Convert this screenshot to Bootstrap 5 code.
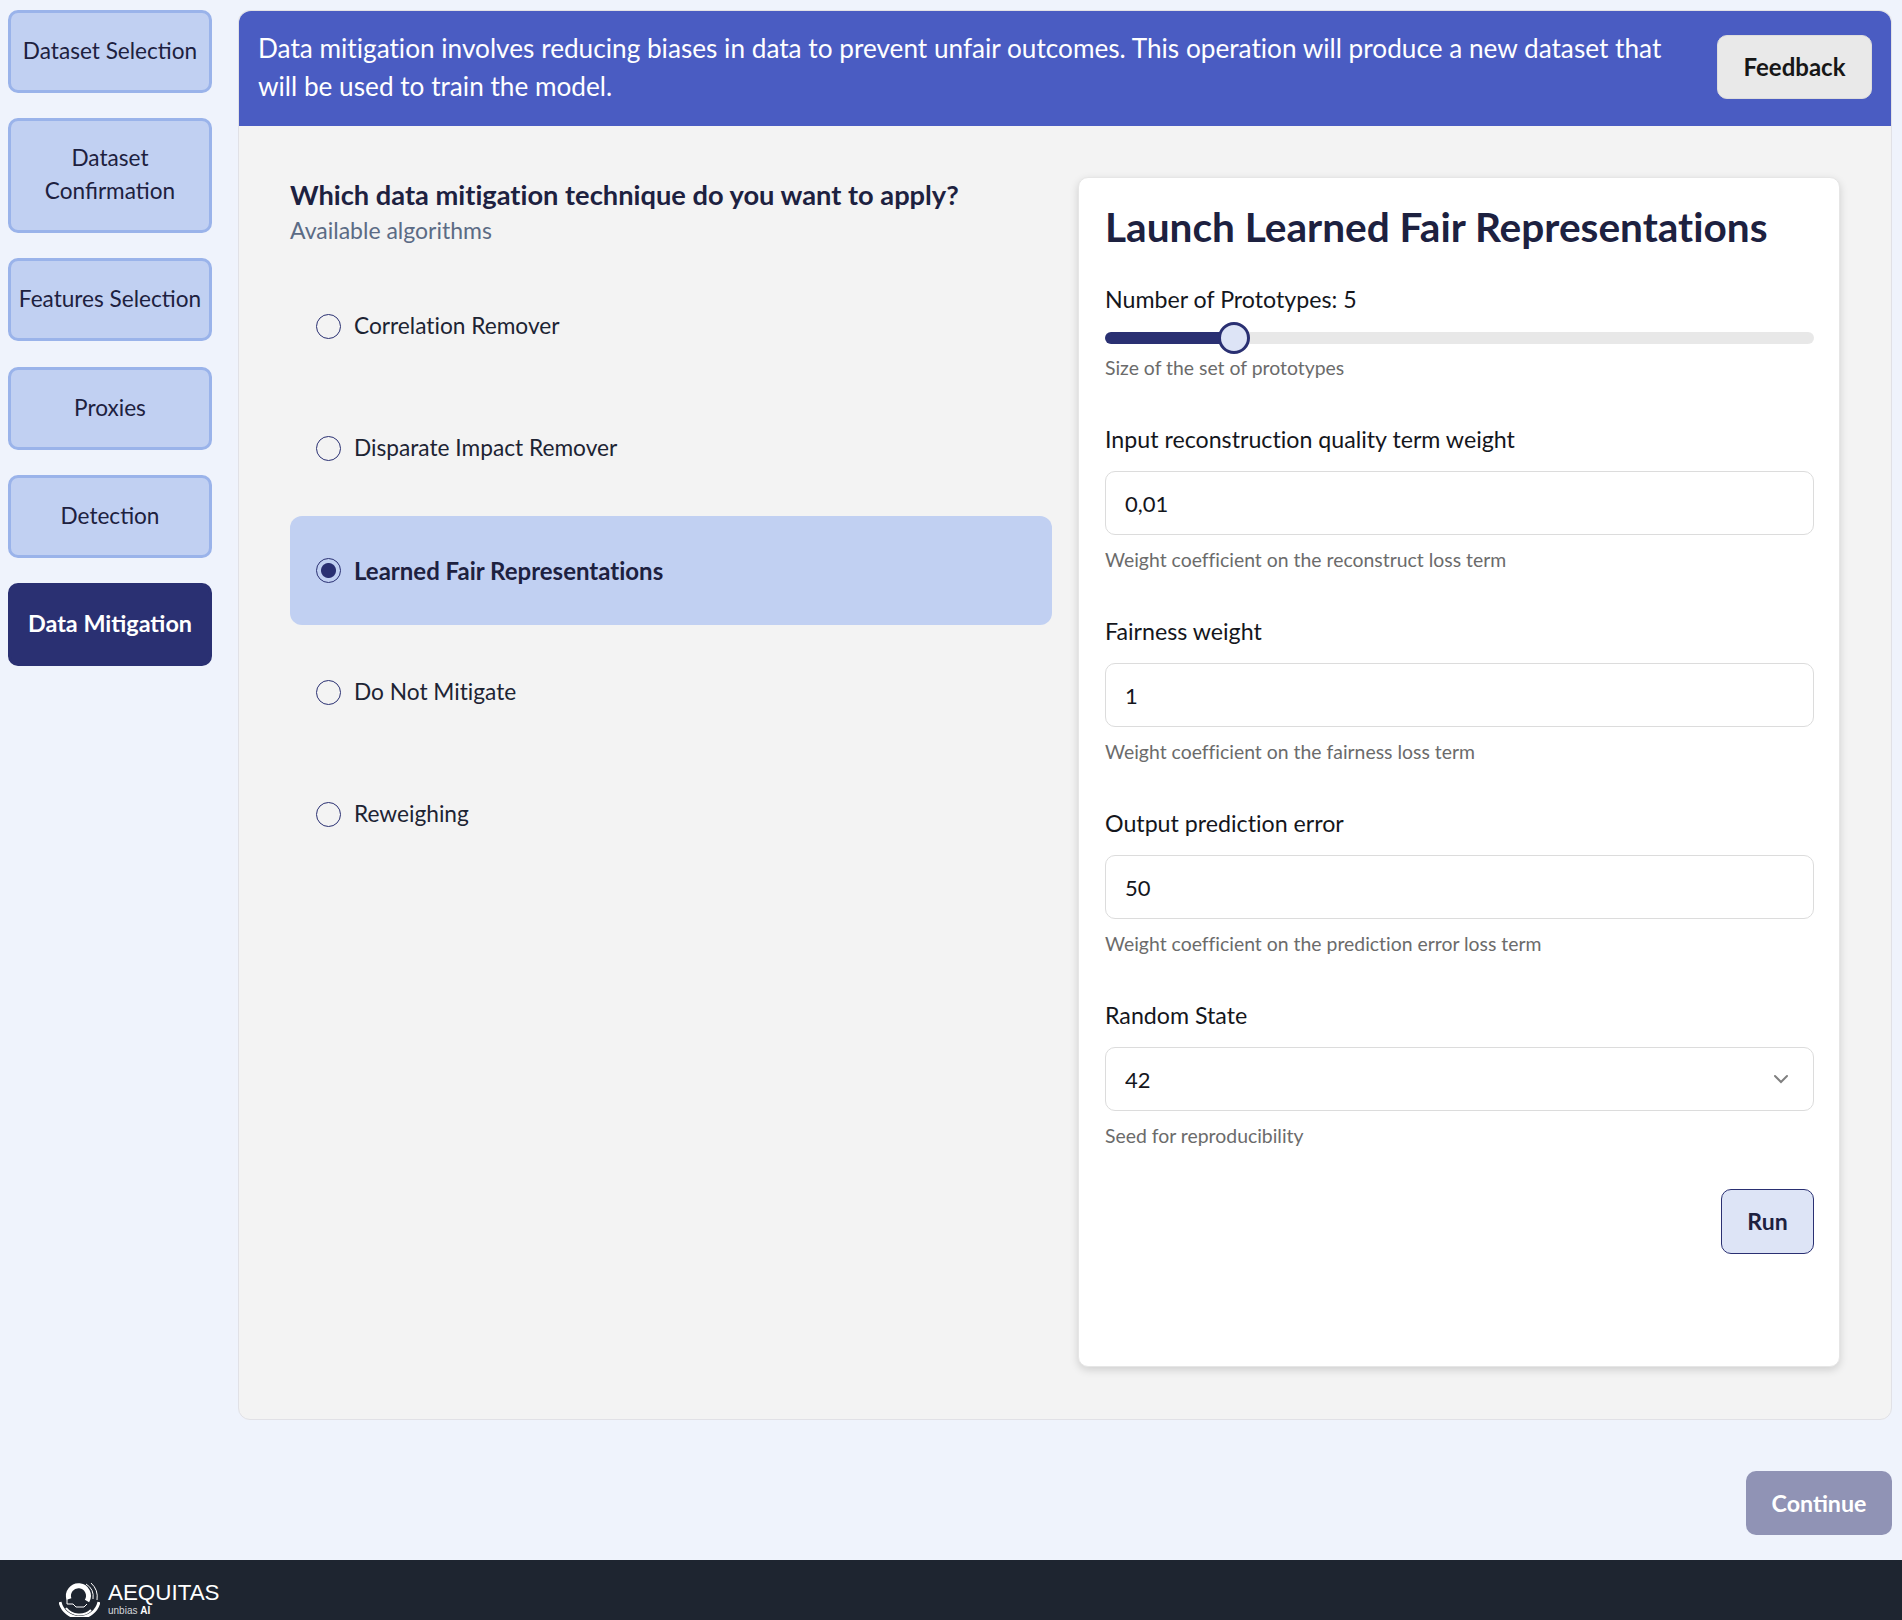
<!DOCTYPE html>
<html lang="en">
<head>
    <meta charset="UTF-8">
    <meta name="viewport" content="width=device-width, initial-scale=1.0">
    <title>Data Mitigation</title>
    <link href="https://cdn.jsdelivr.net/npm/bootstrap@5.3.3/dist/css/bootstrap.min.css" rel="stylesheet">
    <style>
        html, body{
            height: 100%;
        }
        body{
            background-color: #eff3fc;
            font-family: Lato, "Liberation Sans", sans-serif;
            font-variant-ligatures: none;
            color: #1d2140;
            overflow: hidden;
        }
        .page-wrap{
            height: 1560px;
            padding: 10px 12px 25px 8px;
        }
        .step-col{
            width: 204px;
            flex: none;
            margin-right: 26px;
            gap: 25px;
        }
        .step-btn{
            width: 100%;
            min-height: 83px;
            padding: 0 4px 3px;
            font-size: 22.6px;
            line-height: 33px;
            color: #1d2140;
            background-color: #c1d0f2;
            border: 3px solid #9ab3ea;
            border-radius: 10px;
        }
        .step-btn.tall{
            height: 115px;
        }
        .step-btn.shift-down{
            margin-top: 1px;
        }
        .step-btn.current{
            padding-bottom: 2px;
            font-size: 23.4px;
            color: #fff;
            font-weight: 700;
            background-color: #2a3072;
            border-color: #2a3072;
        }
        .main-panel{
            height: 1410px;
            background-color: #f3f3f3;
            border: 1px solid #e1e1e6;
            border-radius: 12px;
        }
        .info-bar{
            height: 115px;
            padding: 0 19px 4px;
            color: #fff;
            background-color: #4a5cc2;
            border-radius: 12px 12px 0 0;
            font-size: 26.2px;
            line-height: 38px;
        }
        .feedback-btn{
            width: 155px;
            height: 64px;
            font-size: 24px;
            font-weight: 700;
            color: #171717;
            background-color: #e9e9e9;
            border: 1px solid #ddd;
            border-radius: 10px;
        }
        .panel-body{
            padding: 51px 51px 52px 51px;
            gap: 26px;
        }
        .algo-col{
            width: 762px;
            flex: none;
            padding-top: 1px;
        }
        .algo-title{
            font-size: 27.25px;
            line-height: 34px;
            font-weight: 700;
            margin: 0;
        }
        .algo-sub{
            font-size: 23px;
            line-height: 36px;
            color: #5b6b85;
            margin-bottom: 24px;
        }
        .algo-row{
            height: 109px;
            margin: 0 0 13px;
            padding: 0 26px;
            border-radius: 12px;
            font-size: 22.7px;
            color: #1d2433;
        }
        .algo-row.picked{
            background-color: #c1d0f2;
            font-size: 24px;
            font-weight: 700;
            color: #1d2140;
        }
        .algo-row .form-check-input{
            float: none;
            width: 25px;
            height: 25px;
            margin: 0 13px 0 0;
            background-color: transparent;
            border: 1px solid #2a3072;
        }
        .algo-row .form-check-input:checked{
            background-image: radial-gradient(circle, #2a3072 0 7px, transparent 8px);
        }
        .launch-card{
            width: 762px;
            height: 1190px;
            flex: none;
            padding: 25px 25px 26px 26px;
            background-color: #fff;
            border: 1px solid #e6e6e6;
            border-radius: 10px;
            box-shadow: 0 3px 8px rgba(0, 0, 0, 0.15);
        }
        .launch-title{
            font-size: 40.6px;
            line-height: 48px;
            font-weight: 700;
            margin-bottom: 32px;
        }
        .field-label{
            display: block;
            font-size: 23.2px;
            line-height: 32px;
            color: #14161c;
            margin-bottom: 16px;
        }
        .field-input{
            height: 64px;
            padding: 0 19px;
            font-size: 22px;
            color: #14161c;
            border: 1px solid #dcdcdc;
            border-radius: 10px;
        }
        select.field-input{
            background-image: url("data:image/svg+xml,%3csvg xmlns='http://www.w3.org/2000/svg' viewBox='0 0 16 16'%3e%3cpath fill='none' stroke='%23808080' stroke-linecap='round' stroke-width='2' d='M2 5l6 6 6-6'/%3e%3c/svg%3e");
            background-position: right 24px center;
            background-size: 16px 16px;
        }
        .field-help{
            font-size: 19.4px;
            line-height: 26px;
            color: #6b6b6b;
            margin-top: 12px;
            margin-bottom: 42px;
        }
        .proto-range{
            height: 32px;
            display: block;
            margin-top: -9px;
        }
        .proto-range::-webkit-slider-runnable-track{
            height: 12px;
            border-radius: 6px;
            background: linear-gradient(to right, #2a3072 128px, #e8e8e8 128px);
        }
        .proto-range::-webkit-slider-thumb{
            width: 32px;
            height: 32px;
            margin-top: -10px;
            background-color: #dde4f6;
            border: 3px solid #2a3072;
            border-radius: 50%;
        }
        .proto-help{
            margin-top: 1px;
        }
        .run-row{
            margin-top: 40px;
        }
        .run-btn{
            width: 93px;
            height: 65px;
            font-size: 23px;
            font-weight: 700;
            color: #1d2140;
            background-color: #dde4f6;
            border: 1px solid #2a3072;
            border-radius: 10px;
        }
        .continue-btn{
            width: 146px;
            height: 64px;
            font-size: 23.2px;
            font-weight: 700;
            color: #fff;
            background-color: #9093b5;
            border: 0;
            border-radius: 10px;
        }
        .bottom-bar{
            height: 60px;
            padding: 17px 0 0 59px;
            background-color: #1e2530;
            overflow: hidden;
        }
        .brand-name{
            font-family: "Liberation Sans", sans-serif;
            font-size: 22.4px;
            line-height: 24px;
            color: #fff;
        }
        .brand-sub{
            font-family: "Liberation Sans", sans-serif;
            font-size: 10px;
            line-height: 11px;
            color: #d5d7db;
        }
    </style>
</head>
<body>
    <div class="page-wrap d-flex">
        <div class="step-col d-flex flex-column">
            <button type="button" class="step-btn">Dataset Selection</button>
            <button type="button" class="step-btn tall">Dataset Confirmation</button>
            <button type="button" class="step-btn">Features Selection</button>
            <button type="button" class="step-btn shift-down">Proxies</button>
            <button type="button" class="step-btn">Detection</button>
            <button type="button" class="step-btn current">Data Mitigation</button>
        </div>

        <div class="flex-grow-1 d-flex flex-column">
            <div class="main-panel">
                <div class="info-bar d-flex align-items-center justify-content-between gap-4">
                    <div>Data mitigation involves reducing biases in data to prevent unfair outcomes. This operation will produce a new dataset that will be used to train the model.</div>
                    <button type="button" class="feedback-btn flex-shrink-0">Feedback</button>
                </div>
                <div class="panel-body d-flex">
                    <div class="algo-col">
                        <h2 class="algo-title">Which data mitigation technique do you want to apply?</h2>
                        <div class="algo-sub">Available algorithms</div>
                        <label class="algo-row d-flex align-items-center">
                            <input class="form-check-input" type="radio" name="algo"> Correlation Remover
                        </label>
                        <label class="algo-row d-flex align-items-center">
                            <input class="form-check-input" type="radio" name="algo"> Disparate Impact Remover
                        </label>
                        <label class="algo-row picked d-flex align-items-center">
                            <input class="form-check-input" type="radio" name="algo" checked> Learned Fair Representations
                        </label>
                        <label class="algo-row d-flex align-items-center">
                            <input class="form-check-input" type="radio" name="algo"> Do Not Mitigate
                        </label>
                        <label class="algo-row d-flex align-items-center">
                            <input class="form-check-input" type="radio" name="algo"> Reweighing
                        </label>
                    </div>

                    <div class="launch-card">
                        <h1 class="launch-title">Launch Learned Fair Representations</h1>

                        <label class="field-label" for="protoRange">Number of Prototypes: 5</label>
                        <input type="range" class="form-range proto-range" id="protoRange" min="1" max="25" value="5">
                        <div class="field-help proto-help">Size of the set of prototypes</div>

                        <label class="field-label" for="qualityWeight">Input reconstruction quality term weight</label>
                        <input type="text" class="form-control field-input" id="qualityWeight" value="0,01">
                        <div class="field-help">Weight coefficient on the reconstruct loss term</div>

                        <label class="field-label" for="fairWeight">Fairness weight</label>
                        <input type="text" class="form-control field-input" id="fairWeight" value="1">
                        <div class="field-help">Weight coefficient on the fairness loss term</div>

                        <label class="field-label" for="predError">Output prediction error</label>
                        <input type="text" class="form-control field-input" id="predError" value="50">
                        <div class="field-help">Weight coefficient on the prediction error loss term</div>

                        <label class="field-label" for="randomState">Random State</label>
                        <select class="form-select field-input" id="randomState">
                            <option selected>42</option>
                        </select>
                        <div class="field-help mb-0">Seed for reproducibility</div>

                        <div class="run-row d-flex justify-content-end">
                            <button type="button" class="run-btn">Run</button>
                        </div>
                    </div>
                </div>
            </div>
            <div class="d-flex justify-content-end mt-auto">
                <button type="button" class="continue-btn">Continue</button>
            </div>
        </div>
    </div>

    <footer class="bottom-bar d-flex align-items-center gap-2">
        <svg width="41" height="36" viewBox="0 0 41 36" fill="none" stroke="#fff">
            <path d="M10 18a10 10 0 1 1 18 2" stroke-width="5"/>
            <path d="M8 15v8h6l3 3h8l3-3" stroke-width="1"/>
            <path d="M27 3a15 15 0 0 1 7 15" stroke-width="1"/>
            <path d="M32 2a19 19 0 0 1 6 17" stroke-width="1"/>
            <path d="M1 21a20 20 0 0 0 39 0" stroke-width="3"/>
            <path d="M7 27a17 17 0 0 0 25 2" stroke-width="2"/>
        </svg>
        <div>
            <div class="brand-name">AEQUITAS</div>
            <div class="brand-sub">unbias <b class="text-white">AI</b></div>
        </div>
    </footer>
</body>
</html>
